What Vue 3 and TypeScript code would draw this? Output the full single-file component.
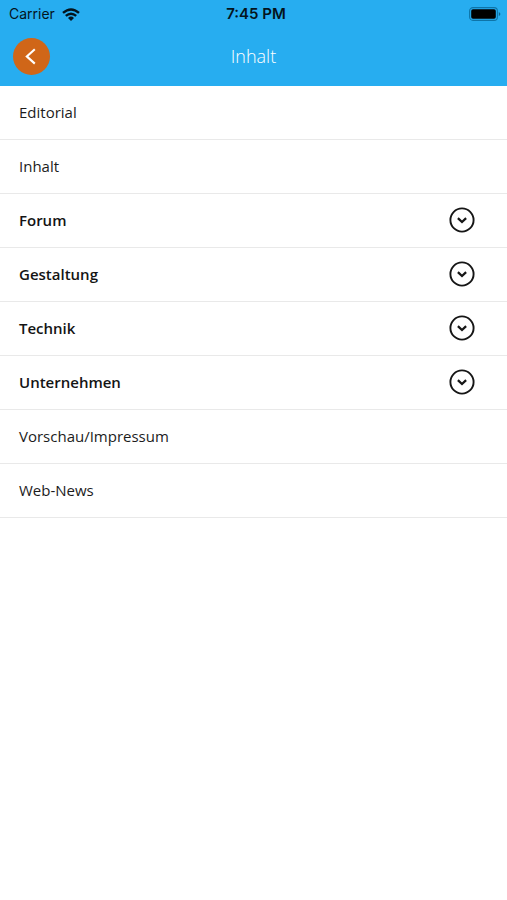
<script setup lang="ts">
import { ref } from 'vue'

interface Entry {
  label: string
  group: boolean
}

const entries: Entry[] = [
  { label: 'Editorial', group: false },
  { label: 'Inhalt', group: false },
  { label: 'Forum', group: true },
  { label: 'Gestaltung', group: true },
  { label: 'Technik', group: true },
  { label: 'Unternehmen', group: true },
  { label: 'Vorschau/Impressum', group: false },
  { label: 'Web-News', group: false },
]

const open = ref<string | null>(null)

function toggle(label: string): void {
  open.value = open.value === label ? null : label
}
</script>

<template>
  <div class="screen">
    <header class="header">
      <div class="status">
        <div class="carrier">
          <span>Carrier</span>
          <svg class="wifi" viewBox="0 0 18 13" aria-hidden="true">
            <g fill="none" stroke="#04141d" stroke-width="2.4">
              <path d="M1 4.9 Q9 -2 17 4.9" />
              <path d="M3.8 7.9 Q9 3.4 14.2 7.9" />
            </g>
            <path d="M6 9.9 Q9 7.3 12 9.9 L9 12.9 Z" fill="#04141d" />
          </svg>
        </div>
        <span class="time">7:45 PM</span>
        <svg class="battery" viewBox="0 0 32 14" aria-hidden="true">
          <rect x="0.6" y="0.6" width="27.8" height="12.8" rx="3.4" fill="none" stroke="#0e74a8" stroke-width="1.1" />
          <rect x="2.2" y="2.2" width="24.6" height="9.6" rx="1.8" fill="#000" />
          <path d="M29.8 4.9 Q31.4 5.6 31.4 7 Q31.4 8.4 29.8 9.1 Z" fill="#0e648f" />
        </svg>
      </div>
      <div class="bar">
        <button class="back" type="button" aria-label="Zurück">
          <svg viewBox="0 0 37 37" aria-hidden="true">
            <path d="M21.8 11.2 L13.8 18.4 L21.8 25.6" fill="none" stroke="#fff" stroke-width="2.1" />
          </svg>
        </button>
        <h1 class="title">Inhalt</h1>
      </div>
    </header>
    <main>
      <ul class="list">
        <li v-for="entry in entries" :key="entry.label" class="item">
          <button
            v-if="entry.group"
            class="row group"
            type="button"
            :aria-expanded="open === entry.label"
            @click="toggle(entry.label)"
          >
            <span>{{ entry.label }}</span>
            <svg class="chevron" viewBox="0 0 26 26" aria-hidden="true">
              <circle cx="13" cy="13" r="11.6" fill="none" stroke="#161616" stroke-width="1.9" />
              <path d="M8.9 11.2 L13 15 L17.1 11.2" fill="none" stroke="#161616" stroke-width="2.3" />
            </svg>
          </button>
          <a v-else class="row" href="#">{{ entry.label }}</a>
        </li>
      </ul>
    </main>
  </div>
</template>

<style>
body {
  margin: 0;
  background: #fff;
}
</style>

<style scoped>
.screen {
  min-height: 100vh;
  background: #fff;
  color: #1c1c1c;
  font-family: 'Open Sans', 'Noto Sans', sans-serif;
}

.header {
  background: #27adf0;
}

.status {
  display: grid;
  grid-template-columns: 1fr auto 1fr;
  align-items: center;
  height: 28px;
  padding: 0 4px 0 9px;
  color: #04141d;
  font: 400 14px/20px Inter, 'Liberation Sans', sans-serif;
}

.carrier {
  display: flex;
  align-items: center;
  gap: 7px;
}

.wifi {
  width: 18px;
  height: 13px;
}

.time {
  font-size: 15px;
  font-weight: 600;
}

.battery {
  justify-self: end;
  width: 32px;
  height: 14px;
  margin-right: 2px;
}

.bar {
  display: grid;
  grid-template-columns: 1fr auto 1fr;
  align-items: center;
  height: 58px;
  padding: 0 13px 2px;
  box-sizing: border-box;
}

.back {
  width: 37px;
  height: 37px;
  padding: 0;
  border: 0;
  border-radius: 50%;
  background: #d06618;
  cursor: pointer;
}

.back svg {
  display: block;
  width: 37px;
  height: 37px;
}

.title {
  margin: 0;
  color: #fff;
  font-size: 18px;
  font-weight: 300;
  line-height: 24px;
}

.list {
  margin: 0;
  padding: 0;
  list-style: none;
}

.item {
  border-bottom: 1px solid #e9e9e9;
}

.row {
  display: flex;
  align-items: center;
  justify-content: space-between;
  width: 100%;
  height: 53px;
  padding: 0 32px 2px 19px;
  box-sizing: border-box;
  border: 0;
  background: none;
  color: inherit;
  font: 400 15px/20px 'Open Sans', 'Noto Sans', sans-serif;
  text-align: left;
  text-decoration: none;
}

.group {
  color: #141414;
  font-weight: 600;
  cursor: pointer;
}

.chevron {
  width: 26px;
  height: 26px;
}
</style>
